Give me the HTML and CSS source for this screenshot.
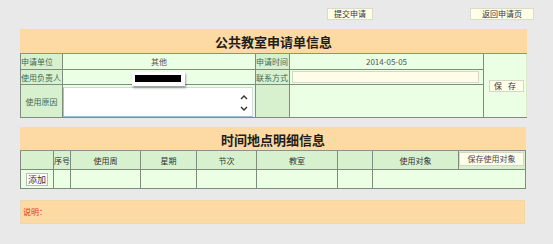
FILE: index.html
```html
<!doctype html>
<html>
<head>
<meta charset="utf-8">
<title>公共教室申请</title>
<link rel="stylesheet" href="styles.css">
</head>
<body>

<div class="topbar">
	<button class="topBtn submitBtn">提交申请</button>
	<button class="topBtn backBtn">返回申请页</button>
</div>

<table class="formTable apply">
	<colgroup>
		<col style="width:42px">
		<col style="width:193px">
		<col style="width:34px">
		<col style="width:194px">
		<col style="width:43px">
	</colgroup>
	<tr class="titleRow">
		<td colspan="5">公共教室申请单信息</td>
	</tr>
	<tr class="row1">
		<td class="label">申请单位</td>
		<td class="value center">其他</td>
		<td class="label">申请时间</td>
		<td class="value center">2014-05-05</td>
		<td class="value saveCell" rowspan="3"><button class="smallBtn saveBtn">保 存</button></td>
	</tr>
	<tr class="row2">
		<td class="label">使用负责人</td>
		<td class="value popHost">
			<div class="suggest"><div class="redact"></div></div>
		</td>
		<td class="label">联系方式</td>
		<td class="value"><div class="phoneInput"></div></td>
	</tr>
	<tr class="row3">
		<td class="label center">使用原因</td>
		<td class="value areaCell">
			<div class="reason">
				<div class="arrows">
					<svg width="8" height="6" viewBox="0 0 8 6"><path d="M1 5 L4 2 L7 5" fill="none" stroke="#333" stroke-width="1.4"/></svg>
					<svg width="8" height="6" viewBox="0 0 8 6"><path d="M1 1 L4 4 L7 1" fill="none" stroke="#333" stroke-width="1.4"/></svg>
				</div>
			</div>
		</td>
		<td class="label"></td>
		<td class="value"></td>
	</tr>
</table>

<table class="formTable detail">
	<colgroup>
		<col style="width:33px">
		<col style="width:17px">
		<col style="width:70px">
		<col style="width:56px">
		<col style="width:60px">
		<col style="width:81px">
		<col style="width:35px">
		<col style="width:86px">
		<col style="width:67px">
	</colgroup>
	<tr class="titleRow">
		<td colspan="9">时间地点明细信息</td>
	</tr>
	<tr class="headRow">
		<td></td>
		<td>序号</td>
		<td>使用周</td>
		<td>星期</td>
		<td>节次</td>
		<td>教室</td>
		<td></td>
		<td>使用对象</td>
		<td class="btnCell"><button class="smallBtn objBtn">保存使用对象</button></td>
	</tr>
	<tr class="dataRow">
		<td class="center"><button class="smallBtn addBtn">添加</button></td>
		<td></td>
		<td></td>
		<td></td>
		<td></td>
		<td></td>
		<td></td>
		<td colspan="2"></td>
	</tr>
</table>

<div class="note">说明：</div>

</body>
</html>
```

FILE: styles.css
```css
body {
	margin: 0px;
	background-color: #e9e9e9;
	font-family: "Noto Sans CJK SC", "Liberation Sans", sans-serif;
	font-size: 8px;
	color: #333;
}
button {
	font-family: inherit;
	font-size: 8px;
	padding: 0px;
	cursor: pointer;
}
.topbar {
	display: flex;
	height: 29px;
	padding-left: 327px;
	align-items: flex-start;
}
.topBtn {
	margin-top: 8px;
	height: 12px;
	line-height: 10px;
	background-color: #fffee6;
	border: 1px solid #d9dccb;
	color: #334;
}
.submitBtn {
	width: 46px;
}
.backBtn {
	width: 64px;
	margin-left: 97px;
}
.formTable {
	border-collapse: collapse;
	table-layout: fixed;
	margin-left: 20px;
	border: 1px solid #dfe6cf;
}
.formTable td {
	padding: 0px;
	border: 1px solid #7f8d7d;
	vertical-align: middle;
	white-space: nowrap;
	overflow: hidden;
}
.apply {
	width: 506px;
}
.detail {
	width: 505px;
	margin-top: 9px;
}
.formTable .titleRow td {
	background-color: #fdd9a4;
	text-align: center;
	font-size: 13px;
	font-weight: bold;
	color: #1e1e1e;
	border: 1px solid #fdd9a4;
	border-bottom-color: #8a9486;
}
.apply .titleRow td {
	height: 23px;
}
.detail .titleRow td {
	height: 22px;
}
.label {
	background-color: #d7f1cf;
	color: #3e6959;
	text-align: left;
}
.value {
	background-color: #ebffe5;
	color: #555;
}
.center {
	text-align: center;
}
.row1 td {
	height: 15px;
}
.row2 td {
	height: 14px;
}
.row3 td {
	height: 31px;
}
.saveCell {
	text-align: center;
	border-right-color: #dfe6cf !important;
}
.smallBtn {
	background-color: #fffee9;
	border: 1px solid #d4d7c6;
	color: #334;
	height: 12px;
	line-height: 10px;
}
.saveBtn {
	width: 35px;
	margin-left: 2px;
	letter-spacing: 2px;
}
.popHost {
	position: relative;
	overflow: visible !important;
}
.suggest {
	position: absolute;
	left: 69px;
	top: 2px;
	width: 53px;
	height: 14px;
	background-color: #fff;
	box-shadow: 1px 2px 2px rgba(0, 0, 0, 0.35);
	z-index: 2;
}
.redact {
	margin: 3px 0px 0px 3px;
	width: 46px;
	height: 7px;
	background-color: #000;
}
.phoneInput {
	margin: 0px 4px 0px 2px;
	height: 10px;
	background-color: #fffde7;
	border: 1px solid #d5d8c4;
}
.areaCell {
	padding: 1px 2px 0px 0px !important;
}
.reason {
	display: flex;
	justify-content: flex-end;
	height: 28px;
	background-color: #fff;
	border: 1px solid #9cc3d8;
	border-top-color: #c9dbe4;
	border-right-color: #d2dde4;
}
.arrows {
	display: flex;
	flex-direction: column;
	justify-content: space-between;
	padding: 6px 4px 4px 0px;
}
.arrows svg {
	display: block;
}
.headRow td {
	height: 18px;
	background-color: #d7f1cf;
	text-align: center;
	color: #333;
}
.btnCell {
	vertical-align: top !important;
	text-align: left !important;
}
.objBtn {
	width: 65px;
	height: 14px;
	line-height: 12px;
	color: #445;
	margin-top: 1px;
}
.dataRow td {
	height: 18px;
	background-color: #ebffe5;
}
.addBtn {
	width: 22px;
	height: 13px;
	line-height: 11px;
	background-color: #fff;
	border: 1px solid #bbb;
	font-size: 9px;
}
.note {
	margin: 11px 0px 0px 20px;
	width: 501px;
	height: 22px;
	line-height: 22px;
	padding-left: 2px;
	background-color: #fdd9a4;
	border: 1px solid #eed7a8;
	color: #e0321e;
}
```
